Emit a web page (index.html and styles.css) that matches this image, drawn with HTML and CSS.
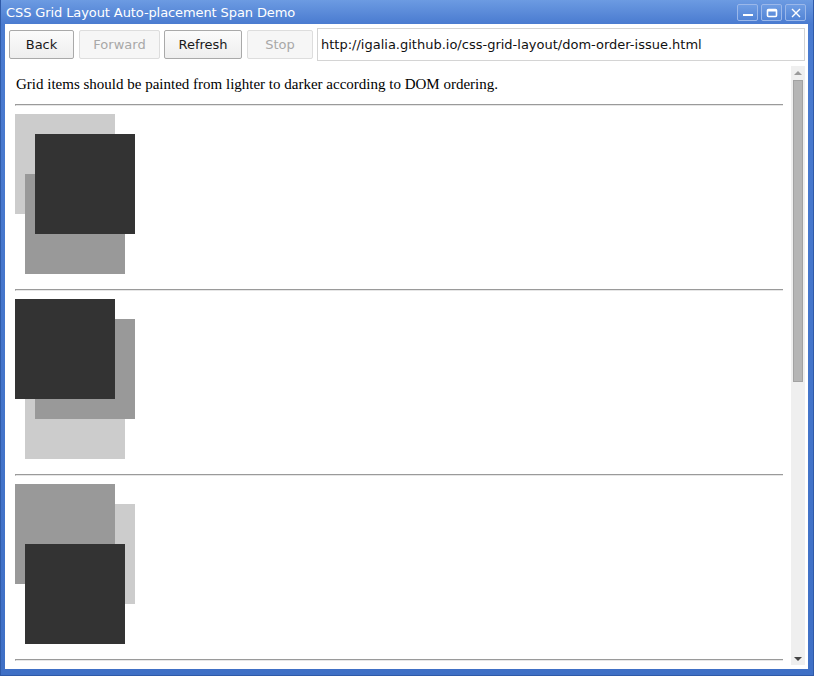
FILE: index.html
```html
<!DOCTYPE html>
<html>
<head>
<meta charset="utf-8">
<title>CSS Grid Layout Auto-placement Span Demo</title>
<link rel="stylesheet" href="styles.css">
</head>
<body>
<div class="window">
  <div class="titlebar">
    <span class="title">CSS Grid Layout Auto-placement Span Demo</span>
    <div class="controls">
      <span class="ctl"><svg width="12" height="10" viewBox="0 0 12 10"><rect x="1" y="6" width="10" height="2" fill="#fff"/></svg></span>
      <span class="ctl"><svg width="12" height="10" viewBox="0 0 12 10"><rect x="1.5" y="1.5" width="9" height="7" rx="1" fill="none" stroke="#fff" stroke-width="1.6"/><rect x="1.5" y="1.5" width="9" height="2" fill="#fff"/></svg></span>
      <span class="ctl"><svg width="12" height="10" viewBox="0 0 12 10"><path d="M2 1 L10 9 M10 1 L2 9" stroke="#fff" stroke-width="1.4"/></svg></span>
    </div>
  </div>
  <div class="client">
    <div class="toolbar">
      <button class="btn btn-back">Back</button>
      <button class="btn btn-fwd" disabled>Forward</button>
      <button class="btn btn-refresh">Refresh</button>
      <button class="btn btn-stop" disabled>Stop</button>
      <div class="url">http://igalia.github.io/css-grid-layout/dom-order-issue.html</div>
    </div>
    <div class="viewport">
      <div class="page">
        <p class="intro">Grid items should be painted from lighter to darker according to DOM ordering.</p>
        <hr class="rule">
        <div class="grid">
          <div class="item a light"></div>
          <div class="item b medium"></div>
          <div class="item c dark"></div>
        </div>
        <hr class="rule">
        <div class="grid">
          <div class="item b light"></div>
          <div class="item c medium"></div>
          <div class="item a dark"></div>
        </div>
        <hr class="rule">
        <div class="grid">
          <div class="item c light"></div>
          <div class="item a medium"></div>
          <div class="item b dark"></div>
        </div>
        <hr class="rule">
      </div>
      <div class="scrollbar">
        <div class="arrow up"></div>
        <div class="track"><div class="thumb"></div></div>
        <div class="arrow down"></div>
      </div>
    </div>
  </div>
</div>
</body>
</html>
```
FILE: styles.css
```css
html, body {
  margin: 0;
  padding: 0;
  background: #ffffff;
}

.window {
  width: 814px;
  height: 676px;
  box-sizing: border-box;
  display: flex;
  flex-direction: column;
  background: linear-gradient(#6c9be2, #4a7bd0 24px, #3f70c6);
  padding: 0 5px 6px 4px;
  border-left: 1px solid #2f5aa8;
  border-right: 1px solid #2f5aa8;
  border-bottom: 1px solid #2f5aa8;
}

.titlebar {
  height: 24px;
  display: flex;
  align-items: center;
  justify-content: space-between;
  padding: 0 2px 0 1px;
}

.title {
  font-family: "DejaVu Sans", sans-serif;
  font-size: 13px;
  color: #ffffff;
  letter-spacing: -0.1px;
}

.controls {
  display: flex;
  gap: 3px;
  margin-top: 1px;
}

.ctl {
  width: 19px;
  height: 15px;
  border: 1px solid #9bb8ea;
  border-radius: 2px;
  background: linear-gradient(#6f9de3, #5284d6);
  display: flex;
  align-items: center;
  justify-content: center;
}

.client {
  flex: 1;
  background: #ffffff;
  display: flex;
  flex-direction: column;
  padding: 0 3px 4px 2px;
  min-height: 0;
}

.toolbar {
  height: 41px;
  box-sizing: border-box;
  display: flex;
  align-items: center;
  padding: 0 0 0 2px;
  gap: 4px;
}

.btn {
  height: 29px;
  box-sizing: border-box;
  font-family: "DejaVu Sans", sans-serif;
  font-size: 13px;
  color: #1a1a1a;
  background: linear-gradient(#fbfbfb, #eeeeee);
  border: 1px solid #a9a9a9;
  border-radius: 2px;
  padding: 0;
  margin: 0;
}

.btn[disabled] {
  color: #a8a8a8;
  background: #f6f6f6;
  border-color: #dddddd;
}

.btn-back { width: 65px; margin-right: 1px; }
.btn-fwd { width: 81px; }
.btn-refresh { width: 78px; margin-right: 1px; }
.btn-stop { width: 66px; }

.url {
  flex: 1;
  height: 33px;
  box-sizing: border-box;
  border: 1px solid #d4d4d4;
  background: #ffffff;
  font-family: "DejaVu Sans", sans-serif;
  font-size: 13px;
  color: #111111;
  display: flex;
  align-items: center;
  padding-left: 3px;
}

.viewport {
  flex: 1;
  display: flex;
  min-height: 0;
  margin-top: 1px;
}

.page {
  flex: 1;
  padding: 0 8px;
  overflow: hidden;
}

.intro {
  margin: 0;
  padding-top: 10px;
  height: 38px;
  box-sizing: border-box;
  font-family: "Liberation Serif", serif;
  font-size: 15px;
  line-height: 17px;
  color: #000000;
  padding-left: 1px;
  white-space: nowrap;
}

.rule {
  margin: 0;
  height: 0;
  border: 0;
  border-top: 1px solid #9a9a9a;
  border-left: 1px solid #9a9a9a;
  border-bottom: 1px solid #e6e6e6;
}

.grid {
  display: grid;
  grid-template-columns: 10px 10px 80px 10px 10px;
  grid-template-rows: 20px 40px 40px 20px 40px;
  width: 120px;
  margin: 8px 0 15px;
}

.item { min-width: 0; min-height: 0; }
.a { grid-column: 1 / 4; grid-row: 1 / 4; }
.b { grid-column: 2 / 5; grid-row: 3 / 6; }
.c { grid-column: 3 / 6; grid-row: 2 / 5; }

.light { background: #cccccc; z-index: 1; }
.medium { background: #999999; z-index: 2; }
.dark { background: #333333; z-index: 3; }

.scrollbar {
  width: 14px;
  background: #efefef;
  display: flex;
  flex-direction: column;
  align-items: center;
}

.arrow {
  height: 13px;
  width: 14px;
  display: flex;
  align-items: center;
  justify-content: center;
}

.arrow.up::before {
  content: "";
  border-left: 4px solid transparent;
  border-right: 4px solid transparent;
  border-bottom: 4px solid #9a9a9a;
}

.arrow.down::before {
  content: "";
  border-left: 4px solid transparent;
  border-right: 4px solid transparent;
  border-top: 4px solid #444444;
}

.track {
  flex: 1;
  width: 100%;
  display: flex;
  justify-content: center;
  padding-top: 1px;
}

.thumb {
  width: 10px;
  height: 302px;
  box-sizing: border-box;
  background: #b5b5b5;
  border: 1px solid #a2a2a2;
}
```
